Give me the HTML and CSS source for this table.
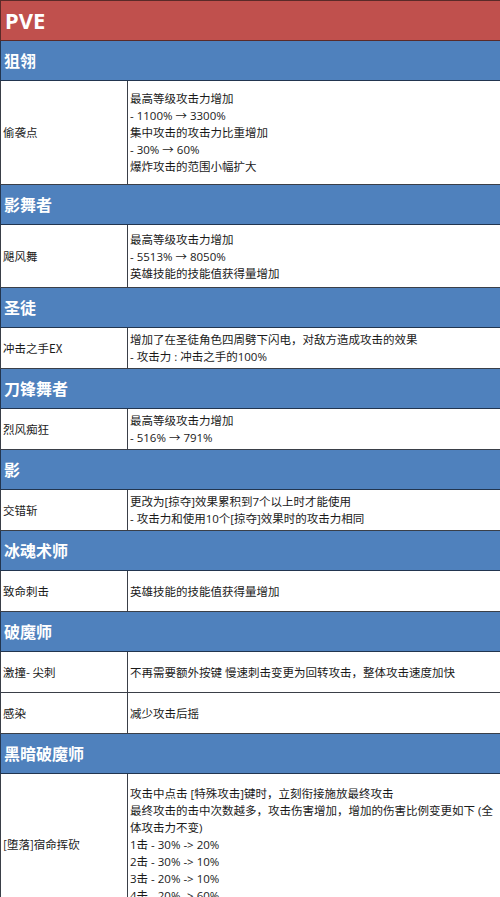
FILE: index.html
```html
<!DOCTYPE html>
<html lang="zh">
<head>
<meta charset="utf-8">
<link rel="stylesheet" href="styles.css">
</head>
<body>
<table class="sheet">
  <colgroup><col class="c-name"><col class="c-desc"></colgroup>
  <tr class="title"><td colspan="2">PVE</td></tr>

  <tr class="cat"><td colspan="2">狙翎</td></tr>
  <tr class="r103"><td class="name">偷袭点</td><td class="desc">最高等级攻击力增加<br>- 1100% → 3300%<br>集中攻击的攻击力比重增加<br>- 30% → 60%<br>爆炸攻击的范围小幅扩大</td></tr>

  <tr class="cat"><td colspan="2">影舞者</td></tr>
  <tr class="r62"><td class="name">飓风舞</td><td class="desc">最高等级攻击力增加<br>- 5513% → 8050%<br>英雄技能的技能值获得量增加</td></tr>

  <tr class="cat"><td colspan="2">圣徒</td></tr>
  <tr class="r40"><td class="name">冲击之手EX</td><td class="desc">增加了在圣徒角色四周劈下闪电，对敌方造成攻击的效果<br>- 攻击力 : 冲击之手的100%</td></tr>

  <tr class="cat"><td colspan="2">刀锋舞者</td></tr>
  <tr class="r40"><td class="name">烈风痴狂</td><td class="desc">最高等级攻击力增加<br>- 516% → 791%</td></tr>

  <tr class="cat"><td colspan="2">影</td></tr>
  <tr class="r40"><td class="name">交错斩</td><td class="desc">更改为[掠夺]效果累积到7个以上时才能使用<br>- 攻击力和使用10个[掠夺]效果时的攻击力相同</td></tr>

  <tr class="cat"><td colspan="2">冰魂术师</td></tr>
  <tr class="r40"><td class="name">致命刺击</td><td class="desc">英雄技能的技能值获得量增加</td></tr>

  <tr class="cat"><td colspan="2">破魔师</td></tr>
  <tr class="r40"><td class="name">激撞- 尖刺</td><td class="desc">不再需要额外按键 慢速刺击变更为回转攻击，整体攻击速度加快</td></tr>
  <tr class="r40"><td class="name">感染</td><td class="desc">减少攻击后摇</td></tr>

  <tr class="cat"><td colspan="2">黑暗破魔师</td></tr>
  <tr class="r140"><td class="name">[堕落]宿命挥砍</td><td class="desc">攻击中点击 [特殊攻击]键时，立刻衔接施放最终攻击<br>最终攻击的击中次数越多，攻击伤害增加，增加的伤害比例变更如下 (全体攻击力不变)<br>1击 - 30% -&gt; 20%<br>2击 - 30% -&gt; 10%<br>3击 - 20% -&gt; 10%<br>4击 - 20% -&gt; 60%</td></tr>
</table>
</body>
</html>
```

FILE: styles.css
```css
html, body {
  margin: 0;
  padding: 0;
  background: #ffffff;
}

.sheet {
  width: 500px;
  border-collapse: collapse;
  table-layout: fixed;
  font-family: "Open Sans", "Noto Sans CJK SC", sans-serif;
  font-size: 11.5px;
  color: #1a1a1a;
}

.c-name { width: 127px; }
.c-desc { width: 373px; }

.sheet td {
  padding: 0 2px;
  border: 1px solid #3a3f48;
  vertical-align: middle;
  line-height: 17px;
}

.title td {
  height: 39px;
  background: #c0504d;
  color: #ffffff;
  font-family: "Noto Sans", "Noto Sans CJK SC", sans-serif;
  font-weight: 700;
  font-size: 22px;
  padding-left: 4px;
  border-color: #5a2a28;
}

.cat td {
  height: 39px;
  background: #4f81bd;
  color: #ffffff;
  font-family: "Noto Sans CJK SC", sans-serif;
  font-weight: 700;
  font-size: 16px;
  padding-left: 3px;
  border-color: #22354f;
}

.r40 td { height: 40px; }
.r62 td { height: 62px; }
.r103 td { height: 103px; }
.r140 td { height: 140px; }

.name {
  font-family: "Noto Sans CJK SC", sans-serif;
}

.desc {
  padding-left: 2px;
}
```
